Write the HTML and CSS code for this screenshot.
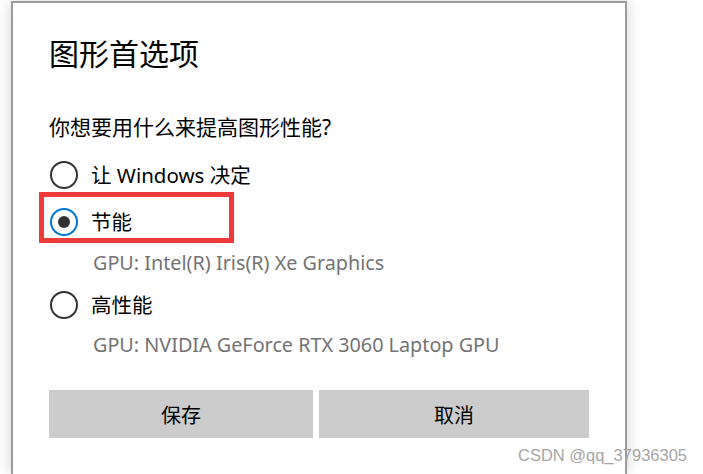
FILE: index.html
```html
<!DOCTYPE html>
<html lang="zh-CN">
<head>
<meta charset="utf-8">
<title>图形首选项</title>
<link rel="stylesheet" href="styles.css">
</head>
<body>
<div class="dialog">
  <h1 class="title">图形首选项</h1>
  <p class="question">你想要用什么来提高图形性能?</p>
  <div class="option opt-first">
    <span class="radio"></span>
    <span class="label">让 Windows 决定</span>
  </div>
  <div class="option opt-second">
    <span class="radio checked"></span>
    <span class="label">节能</span>
    <span class="highlight"></span>
  </div>
  <div class="gpu gpu-first">GPU: Intel(R) Iris(R) Xe Graphics</div>
  <div class="option opt-third">
    <span class="radio"></span>
    <span class="label">高性能</span>
  </div>
  <div class="gpu gpu-second">GPU: NVIDIA GeForce RTX 3060 Laptop GPU</div>
  <div class="buttons">
    <button class="btn">保存</button>
    <button class="btn">取消</button>
  </div>
</div>
<div class="watermark">CSDN @qq_37936305</div>
</body>
</html>
```

FILE: styles.css
```css
html, body {
  margin: 0;
  padding: 0;
  background: #ffffff;
  height: 100%;
  overflow: hidden;
}

body {
  font-family: "Noto Sans", "Noto Sans CJK SC", sans-serif;
  color: #000;
  position: relative;
}

.dialog {
  margin: 1px 0 0 11px;
  width: 616px;
  height: 473px;
  box-sizing: border-box;
  border: 2px solid #9c9c9c;
  border-bottom: none;
  background: #fff;
  padding: 0 36px;
  box-shadow: 0 0 14px rgba(0, 0, 0, 0.18);
}

.title {
  margin: 0;
  padding-top: 29px;
  font-weight: normal;
  font-size: 30px;
  line-height: 40px;
  font-family: "Noto Sans CJK SC", sans-serif;
}

.question {
  margin: 41px 0 0;
  font-size: 21px;
  line-height: 28px;
}

.option {
  position: relative;
  display: flex;
  align-items: center;
  height: 40px;
  font-size: 20.5px;
}

.opt-first { margin-top: 14px; }
.opt-second { margin-top: 7px; }
.opt-third { margin-top: 8px; }

.radio {
  width: 28px;
  height: 28px;
  box-sizing: border-box;
  border: 2.5px solid #333;
  border-radius: 50%;
  margin: 0 13px 0 1px;
  display: flex;
  align-items: center;
  justify-content: center;
  flex: none;
}

.radio.checked {
  border-color: #0078d7;
}

.radio.checked::after {
  content: "";
  width: 12px;
  height: 12px;
  border-radius: 50%;
  background: #333;
}

.label {
  line-height: 40px;
}

.highlight {
  position: absolute;
  left: -10px;
  top: -10px;
  width: 195px;
  height: 51px;
  box-sizing: border-box;
  border: 5px solid #ef3a3a;
}

.gpu {
  padding-left: 44px;
  font-size: 19.8px;
  line-height: 28px;
  color: #737373;
}

.gpu-first { margin-top: 7px; }
.gpu-second { margin-top: 6px; }

.buttons {
  margin-top: 31px;
  display: grid;
  grid-template-columns: 264px 270px;
  column-gap: 6px;
}

.btn {
  height: 48px;
  border: none;
  background: #cccccc;
  font-family: "Noto Sans CJK SC", sans-serif;
  font-size: 20px;
  color: #000;
  padding: 0;
}

.watermark {
  position: absolute;
  left: 518px;
  top: 447px;
  font-family: "Liberation Sans", Arial, sans-serif;
  font-size: 16.5px;
  line-height: 17px;
  color: #a6a6a6;
  white-space: nowrap;
}
```
